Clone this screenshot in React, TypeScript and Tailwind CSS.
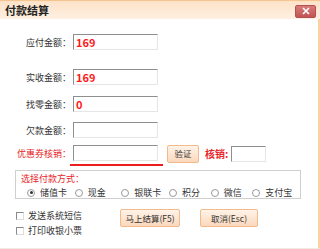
const font = { fontFamily: '"Noto Sans CJK SC", "Liberation Sans", sans-serif' };

function Field({ label, value, top, red }: { label: string; value?: string; top: string; red?: boolean }) {
  return (
    <div className={`flex items-center ${top}`}>
      <div className={`w-[72px] pr-[2px] text-right text-[9px] leading-none ${red ? "text-[#e8262a]" : "text-[#333]"}`}>
        {label}
      </div>
      <div className="flex h-[16px] w-[85px] items-center border border-t-[#8f8f8f] border-l-[#8f8f8f] border-r-[#e6e6e6] border-b-[#e6e6e6] bg-white pl-[2px] text-[11px] font-bold leading-none text-[#ff1a1a]">
        {value}
      </div>
    </div>
  );
}

function Radio({ label, checked, w }: { label: string; checked?: boolean; w: string }) {
  return (
    <div className={`flex items-center gap-[5px] ${w}`}>
      <span className="flex h-[8px] w-[8px] items-center justify-center rounded-full border border-[#9a9a9a] bg-white">
        {checked && <span className="h-[3px] w-[3px] rounded-full bg-[#333]" />}
      </span>
      <span className="text-[9px] leading-none text-[#333]">{label}</span>
    </div>
  );
}

function Check({ label }: { label: string }) {
  return (
    <div className="flex items-center gap-[4px]">
      <span className="h-[8px] w-[8px] border border-t-[#8a8a8a] border-l-[#8a8a8a] border-r-[#ddd] border-b-[#ddd] bg-white" />
      <span className="text-[9px] leading-none text-[#333]">{label}</span>
    </div>
  );
}

const btn =
  "flex items-center justify-center rounded-[2px] border border-[#f2b98a] bg-gradient-to-b from-[#fff3e8] to-[#fbd8bd] text-[8.5px] leading-none text-[#333]";

export default function App() {
  return (
    <div style={font} className="flex h-[249px] w-[320px] flex-col bg-white">
      <div className="flex h-[19px] items-center justify-between border-t border-[#f4c58e] bg-gradient-to-b from-[#fde2c8] to-[#fff0e2] pl-[5px] pr-[4px]">
        <span className="text-[11px] font-bold leading-none text-[#222]">付款结算</span>
        <span className="mt-[2px] flex h-[13px] w-[21px] items-center justify-center rounded-[2px] border border-[#b65050] bg-gradient-to-b from-[#d87a7a] to-[#c05555]">
          <svg width="10" height="8" viewBox="0 0 10 8">
            <path d="M2 1 L8 7 M8 1 L2 7" stroke="#fff" strokeWidth="1.6" />
          </svg>
        </span>
      </div>
      <div className="flex flex-1 flex-col border-r-2 border-b border-r-[#f7d39d] border-b-[#f3ebe1] pl-[1px]">
        <Field label="应付金额：" value="169" top="mt-[15px]" />
        <Field label="实收金额：" value="169" top="mt-[19px]" />
        <Field label="找零金额：" value="0" top="mt-[11px]" />
        <Field label="欠款金额：" top="mt-[10px]" />
        <div className="mt-[7px] flex items-center">
          <div className="flex flex-col">
            <Field label="优惠券核销：" top="" red />
            <div className="ml-[69px] mt-[3px] h-[2px] w-[93px] bg-[#ee1c1c]" />
          </div>
          <div className={`${btn} ml-[4px] -mt-[4px] h-[18px] w-[32px]`}>验证</div>
          <span className="ml-[6px] -mt-[4px] text-[10px] font-bold leading-none text-[#e8262a]">核销:</span>
          <div className="ml-[3px] -mt-[4px] h-[16px] w-[35px] border border-t-[#8f8f8f] border-l-[#8f8f8f] border-r-[#e6e6e6] border-b-[#e6e6e6] bg-white" />
        </div>
        <div className="ml-[14px] mt-[4px] h-[29px] w-[286px] border border-[#cfcfcf] pl-[5px]">
          <div className="mt-[3px] text-[9px] leading-none text-[#e8262a]">选择付款方式：</div>
          <div className="mt-[5px] flex items-center pl-[6px]">
            <Radio label="储值卡" checked w="w-[48px]" />
            <Radio label="现金" w="w-[47px]" />
            <Radio label="银联卡" w="w-[48px]" />
            <Radio label="积分" w="w-[42px]" />
            <Radio label="微信" w="w-[42px]" />
            <Radio label="支付宝" w="w-[48px]" />
          </div>
        </div>
        <div className="mt-[12px] flex">
          <div className="ml-[15px] flex w-[66px] flex-col gap-[6px]">
            <Check label="发送系统短信" />
            <Check label="打印收银小票" />
          </div>
          <div className={`${btn} ml-[38px] -mt-[2px] h-[18px] w-[60px]`}>马上结算(F5)</div>
          <div className={`${btn} ml-[20px] -mt-[2px] h-[18px] w-[58px]`}>取消(Esc)</div>
        </div>
      </div>
    </div>
  );
}
